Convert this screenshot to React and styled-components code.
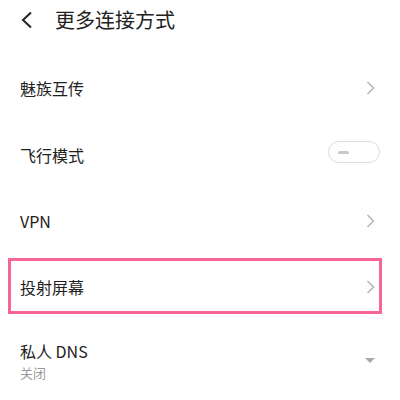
import React from "react";
import styled, { createGlobalStyle } from "styled-components";

const GlobalStyle = createGlobalStyle`
  html, body {
    margin: 0;
    padding: 0;
    background: #ffffff;
  }
  body {
    font-family: "Noto Sans CJK SC", "Noto Sans", sans-serif;
    color: #222222;
  }
`;

const Page = styled.div`
  width: 400px;
  height: 400px;
  overflow: hidden;
  background: #ffffff;
`;

const Header = styled.div`
  height: 40px;
  display: flex;
  align-items: center;
  padding-left: 20px;
  gap: 21px;
`;

const Title = styled.div`
  font-size: 20px;
  line-height: 24px;
  color: #222222;
`;

const List = styled.div`
  padding-top: 14px;
  display: flex;
  flex-direction: column;
`;

const Row = styled.div`
  height: ${(p) => p.h}px;
  display: flex;
  align-items: center;
  justify-content: space-between;
  padding: 0 25px 0 20px;
  box-sizing: border-box;
`;

const Highlight = styled.div`
  height: 56px;
  margin: 4px 18px 0 8px;
  border: 3px solid #f76593;
  box-sizing: border-box;
  display: flex;
  align-items: center;
  justify-content: space-between;
  padding: 2px 4px 0 9px;
`;

const Label = styled.div`
  font-size: 16px;
  line-height: ${(p) => p.lh || 22}px;
  color: #222222;
`;

const Sub = styled.div`
  font-size: 13px;
  line-height: 16px;
  margin-top: 4px;
  color: #9a9a9a;
`;

const DnsRow = styled.div`
  display: flex;
  align-items: flex-start;
  justify-content: space-between;
  padding: 27px 25px 0 20px;
`;

const Toggle = styled.div`
  width: 52px;
  height: 22px;
  border: 1.5px solid #dcdcdc;
  border-radius: 12px;
  box-sizing: border-box;
  display: flex;
  align-items: center;
  padding-left: 9px;
  margin-right: -5px;
  margin-top: -6px;
`;

const Knob = styled.div`
  width: 11px;
  height: 3px;
  border-radius: 2px;
  background: #c8c8c8;
`;

const Caret = styled.div`
  width: 0;
  height: 0;
  border-left: 5px solid transparent;
  border-right: 5px solid transparent;
  border-top: 5px solid #a9a9a9;
  margin-top: 17px;
`;

const Back = () => (
  <svg width="14" height="18" viewBox="0 0 14 18">
    <path d="M11 1.5 L3 9 L11 16.5" fill="none" stroke="#222" strokeWidth="2" />
  </svg>
);

const Chevron = () => (
  <svg width="9" height="14" viewBox="0 0 9 14">
    <path d="M1.5 1 L7.5 7 L1.5 13" fill="none" stroke="#b5b5b5" strokeWidth="1.5" />
  </svg>
);

export default function App() {
  return (
    <Page>
      <GlobalStyle />
      <Header>
        <Back />
        <Title>更多连接方式</Title>
      </Header>
      <List>
        <Row h={68}>
          <Label>魅族互传</Label>
          <Chevron />
        </Row>
        <Row h={66}>
          <Label>飞行模式</Label>
          <Toggle>
            <Knob />
          </Toggle>
        </Row>
        <Row h={66}>
          <Label>VPN</Label>
          <Chevron />
        </Row>
        <Highlight>
          <Label>投射屏幕</Label>
          <Chevron />
        </Highlight>
        <DnsRow>
          <div>
            <Label lh={20}>私人 DNS</Label>
            <Sub>关闭</Sub>
          </div>
          <Caret />
        </DnsRow>
      </List>
    </Page>
  );
}
